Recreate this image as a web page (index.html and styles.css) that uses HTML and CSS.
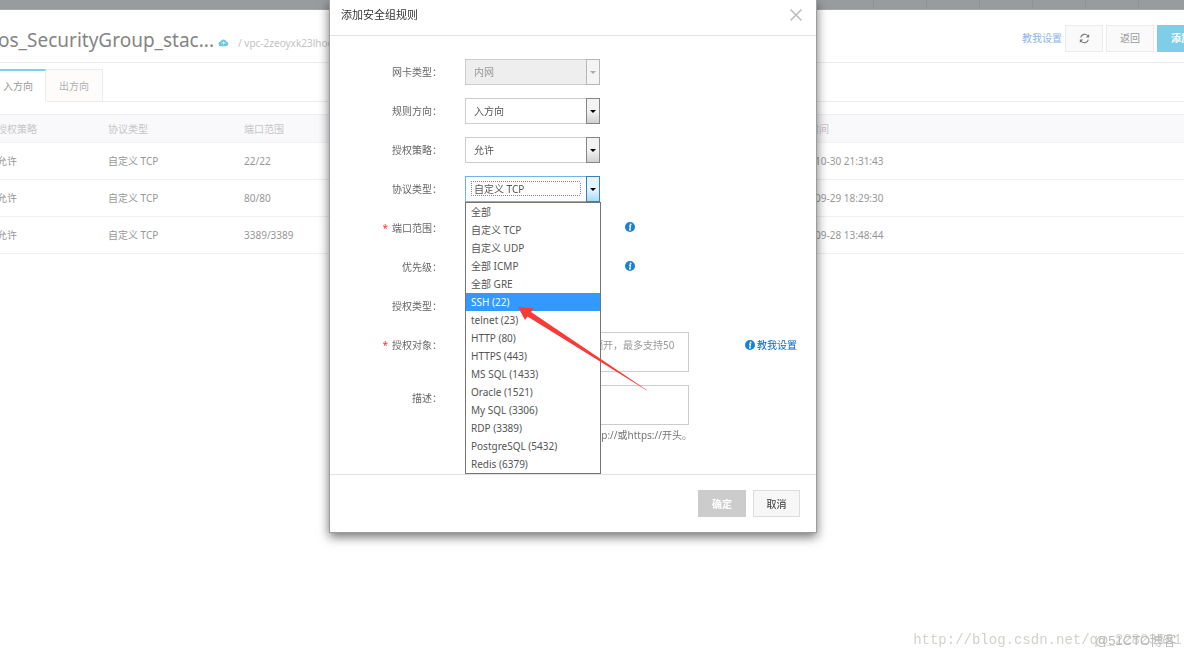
FILE: index.html
```html
<!DOCTYPE html>
<html lang="zh-CN">
<head>
<meta charset="utf-8">
<title>添加安全组规则</title>
<link rel="stylesheet" href="styles.css">
</head>
<body>
<div class="page">
  <nav class="topbar" aria-label="主导航">
    <span class="topbar-item"></span><span class="topbar-item"></span><span class="topbar-item"></span><span class="topbar-item"></span><span class="topbar-item"></span><span class="topbar-item"></span>
  </nav>
  <header class="page-head">
    <h1 class="page-title">os_SecurityGroup_stac...</h1>
    <svg class="cloud" viewBox="0 0 20 14" aria-hidden="true"><path d="M5 13a4.500 4.500 0 0 1-.5-8.900A6 6 0 0 1 15.500 4.600 4.300 4.300 0 0 1 15 13z" fill="#6cc8e5"/><path d="M6 8l4-3 4 3M10 5v5" stroke="#fff" stroke-width="1.200" fill="none"/></svg>
    <span class="vpc">/ vpc-2zeoyxk23lhoo</span>
    <div class="head-actions">
      <a class="help" href="#">教我设置</a>
      <button class="btn refresh" type="button" aria-label="刷新"><svg viewBox="0 0 20 20"><g fill="none" stroke="#777" stroke-width="2"><path d="M3 8a7.500 7.500 0 0 1 13-3"/><path d="M17 12a7.500 7.500 0 0 1-13 3"/></g><path d="M18.500 2v6h-6zM1.500 18v-6h6z" fill="#777"/></svg></button>
      <button class="btn" type="button">返回</button>
      <button class="btn add" type="button">添加安全组规则</button>
    </div>
  </header>
  <div class="tabs" role="tablist">
    <button class="tab active" role="tab" aria-selected="true" type="button">入方向</button>
    <button class="tab" role="tab" aria-selected="false" type="button">出方向</button>
  </div>
  <table class="rules">
    <colgroup><col class="c-policy"><col class="c-proto"><col class="c-port"><col></colgroup>
    <thead><tr><th>授权策略</th><th>协议类型</th><th>端口范围</th><th>创建时间</th></tr></thead>
    <tbody>
      <tr><td>允许</td><td>自定义 TCP</td><td>22/22</td><td>2017-10-30 21:31:43</td></tr>
      <tr><td>允许</td><td>自定义 TCP</td><td>80/80</td><td>2017-09-29 18:29:30</td></tr>
      <tr><td>允许</td><td>自定义 TCP</td><td>3389/3389</td><td>2017-09-28 13:48:44</td></tr>
    </tbody>
  </table>
</div>

<div class="overlay">
  <form class="modal" role="dialog" aria-labelledby="dlg-title">
    <div class="modal-head">
      <h2 class="modal-title" id="dlg-title">添加安全组规则</h2>
      <button class="close" type="button" aria-label="关闭"><svg viewBox="0 0 12 12"><path d="M.5.5l11 11M11.500.5l-11 11" stroke="#bbb" stroke-width="1.500"/></svg></button>
    </div>
    <div class="fields">
      <div class="row"><label class="label" for="nic">网卡类型：</label>
        <div class="select disabled"><select id="nic" disabled><option>内网</option></select></div></div>
      <div class="row"><label class="label" for="dir">规则方向：</label>
        <div class="select"><select id="dir"><option>入方向</option></select></div></div>
      <div class="row"><label class="label" for="policy">授权策略：</label>
        <div class="select"><select id="policy"><option>允许</option></select></div></div>
      <div class="row"><label class="label" for="proto">协议类型：</label>
        <div class="select open"><select id="proto"><option>自定义 TCP</option></select>
          <ul class="menu" role="listbox" aria-label="协议类型">
            <li role="option">全部</li>
            <li role="option">自定义 TCP</li>
            <li role="option">自定义 UDP</li>
            <li role="option">全部 ICMP</li>
            <li role="option">全部 GRE</li>
            <li role="option" class="picked" aria-selected="true">SSH (22)</li>
            <li role="option">telnet (23)</li>
            <li role="option">HTTP (80)</li>
            <li role="option">HTTPS (443)</li>
            <li role="option">MS SQL (1433)</li>
            <li role="option">Oracle (1521)</li>
            <li role="option">My SQL (3306)</li>
            <li role="option">RDP (3389)</li>
            <li role="option">PostgreSQL (5432)</li>
            <li role="option">Redis (6379)</li>
          </ul>
          <svg class="arrow" viewBox="0 0 130 84" aria-hidden="true"><path d="M0 0L16 1.500 13 5 129.500 83.500 128 83 9.500 9.500 7 13z" fill="#f93a37"/></svg>
        </div></div>
      <div class="row"><label class="label" for="port"><span class="req">*</span>端口范围：</label>
        <input class="input" id="port" type="text">
        <svg class="info" viewBox="0 0 10 10" aria-hidden="true"><circle cx="5" cy="5" r="5" fill="#1a80d8"/><circle cx="5.600" cy="2.400" r=".9" fill="#fff"/><path d="M4 4.200h1.500L4.700 7.800h1.200" stroke="#fff" stroke-width="1.200" fill="none"/></svg></div>
      <div class="row"><label class="label" for="prio">优先级：</label>
        <input class="input" id="prio" type="text">
        <svg class="info" viewBox="0 0 10 10" aria-hidden="true"><circle cx="5" cy="5" r="5" fill="#1a80d8"/><circle cx="5.600" cy="2.400" r=".9" fill="#fff"/><path d="M4 4.200h1.500L4.700 7.800h1.200" stroke="#fff" stroke-width="1.200" fill="none"/></svg></div>
      <div class="row"><label class="label" for="kind">授权类型：</label>
        <input class="input" id="kind" type="text"></div>
      <div class="row"><label class="label" for="target"><span class="req">*</span>授权对象：</label>
        <textarea class="area target" id="target" placeholder="隔开，最多支持50"></textarea>
        <a class="teach" href="#"><svg class="info" viewBox="0 0 10 10" aria-hidden="true"><circle cx="5" cy="5" r="5" fill="#1a80d8"/><circle cx="5.600" cy="2.400" r=".9" fill="#fff"/><path d="M4 4.200h1.500L4.700 7.800h1.200" stroke="#fff" stroke-width="1.200" fill="none"/></svg>教我设置</a></div>
      <div class="row"><label class="label" for="desc">描述：</label>
        <div class="stack"><textarea class="area" id="desc"></textarea>
        <p class="hint">不能以http://或https://开头。</p></div></div>
    </div>
    <div class="modal-foot">
      <button class="btn ok" type="submit" disabled>确定</button>
      <button class="btn cancel" type="button">取消</button>
    </div>
  </form>
</div>
<div class="mark mark-url">http://blog.csdn.net/qq_22823581</div>
<div class="mark mark-site">@51CTO博客</div>
</body>
</html>
```
FILE: styles.css
```css
*, *::before, *::after { box-sizing: border-box; }
body {
  margin: 0;
  min-height: 100vh;
  background: #fff;
  color: #999;
  font: 10px/18px "Noto Sans", "Noto Sans CJK SC", sans-serif;
}
button, select, input, textarea { font: inherit; color: inherit; margin: 0; }
a { text-decoration: none; }

.page { overflow: hidden; }
.topbar { display: flex; justify-content: flex-end; height: 10px; background: #999c9e; border-bottom: 1px solid #a4a7a9; }
.topbar-item { width: 53px; border-left: 1px solid #8f9294; }
.topbar-item:last-child { width: 46px; }
.page-head { display: flex; align-items: center; height: 53px; margin-right: -71px; border-bottom: 1px solid #ececec; }
.page-title { margin: 8px 0 0 -2px; font-size: 19px; line-height: 28px; font-weight: 400; color: #858585; white-space: nowrap; }
.cloud { width: 11px; height: 8px; margin: 14px 9px 0 4px; }
.vpc { margin-top: 14px; color: #c4c4c4; white-space: nowrap; }
.head-actions { display: flex; align-items: center; gap: 3px; margin: 4px 0 0 auto; white-space: nowrap; }
.help { color: #8db5e8; }
.btn { height: 27px; padding: 0 13px; border: 1px solid #ebebeb; background: #fafafa; color: #999; white-space: nowrap; }
.refresh { display: grid; place-items: center; width: 38px; }
.refresh svg { width: 11px; height: 11px; }
.add { background: #7fcde6; border-color: #7fcde6; color: #fff; font-weight: 700; }

.tabs { display: flex; height: 33px; margin-top: 6px; border-bottom: 1px solid #ececec; }
.tab { width: 57px; height: 33px; padding: 0; border: 1px solid #ececec; border-left: 0; background: #fdfcfb; color: #b0b0b0; }
.tab.active { width: 46px; padding-right: 9px; border-top: 2px solid #80d0e8; border-bottom-color: #fff; background: #fff; color: #999; }

.rules { width: 100%; margin-top: 12px; border-collapse: collapse; table-layout: fixed; }
.c-policy { width: 108px; }
.c-proto { width: 136px; }
.c-port { width: 545px; }
.rules th, .rules td { padding: 0; text-align: left; font-weight: 400; white-space: nowrap; }
.rules th { height: 28px; background: #f9f9fc; border-top: 1px solid #efeff2; border-bottom: 1px solid #f3f3f5; color: #c6c6c6; }
.rules td { height: 37px; border-bottom: 1px solid #f0f0f0; color: #979797; }
.rules th:first-child, .rules td:first-child { text-indent: -3px; }

.overlay { position: fixed; inset: 0; display: flex; align-items: flex-start; justify-content: center; padding-right: 38px; }
.modal { width: 488px; border: 1px solid #9a9d9e; border-top: 0; background: #fff; color: #666; box-shadow: 0 4px 10px rgba(0, 0, 0, .55); }
.modal-head { display: flex; align-items: center; justify-content: space-between; height: 36px; padding: 0 13px 5px 11px; border-bottom: 1px solid #e2e2e2; }
.modal-title { margin: 0; font-size: 11px; font-weight: 400; color: #333; }
.close { display: grid; place-items: center; width: 14px; height: 14px; padding: 0; border: 0; background: none; }
.close svg { width: 12px; height: 12px; }

.fields { display: grid; gap: 13px; padding: 23px 0 29px; }
.row { display: flex; align-items: flex-start; min-height: 26px; }
.label { width: 112px; margin-right: 23px; line-height: 26px; text-align: right; }
.req { margin-right: 4px; color: #f33; }
.select { position: relative; width: 135px; height: 26px; }
.select select { appearance: none; width: 100%; height: 26px; padding: 0 20px 0 8px; border: 1px solid #ccc; border-radius: 0; background: #fff; color: #555; }
.select::before { content: ""; position: absolute; z-index: 2; right: 4px; top: 12px; border: 3px solid transparent; border-top-color: #000; border-bottom: 0; }
.select::after { content: ""; position: absolute; z-index: 1; right: 0; top: 0; width: 14px; height: 26px; border: 1px solid #858585; background: linear-gradient(#f3f3f3 50%, #d0d0d0); }
.select.disabled select { background: #eee; color: #999; opacity: 1; }
.select.disabled::before { border-top-color: #aaa; }
.select.disabled::after { border-color: #b5b8ba; background: #f4f4f4; }
.select.open::after { border-color: #3c7fb1; background: linear-gradient(#e6f5fd 50%, #a9dbf6); }
.select.open select {
  border-color: #6db4ea;
  background:
    repeating-linear-gradient(90deg, #888 0 1px, #fff 1px 2px) 5px 4px / 110px 1px no-repeat,
    repeating-linear-gradient(90deg, #888 0 1px, #fff 1px 2px) 5px 18px / 110px 1px no-repeat,
    repeating-linear-gradient(#888 0 1px, #fff 1px 2px) 5px 4px / 1px 15px no-repeat,
    repeating-linear-gradient(#888 0 1px, #fff 1px 2px) 114px 4px / 1px 15px no-repeat,
    #fff;
}
.menu { position: absolute; z-index: 3; left: 0; top: 26px; width: 136px; margin: 0; padding: 0; list-style: none; border: 1px solid #767676; background: #fff; color: #555; }
.menu li { padding-left: 5px; white-space: nowrap; }
.menu .picked { background: #3399ff; color: #fff; }
.arrow { position: absolute; z-index: 4; left: 53px; top: 131px; width: 130px; height: 84px; }
.input { width: 135px; height: 26px; border: 1px solid #ccc; background: #fff; }
.info { flex: none; width: 10px; height: 10px; }
.input + .info { margin: 7px 0 0 25px; }
.area { display: block; width: 224px; height: 40px; padding: 3px 8px; border: 1px solid #ccc; background: #fff; resize: none; overflow: hidden; }
.area::placeholder { color: #999; opacity: 1; }
.target { padding: 3px 0 3px 127px; }
.teach { display: flex; align-items: center; gap: 2px; margin-left: 56px; line-height: 26px; color: #06c; }
.stack { width: 227px; }
.hint { margin: 0; line-height: 20px; text-align: right; white-space: nowrap; color: #777; }
.modal-foot { display: flex; justify-content: flex-end; gap: 7px; padding: 15px 16px; border-top: 1px solid #e2e2e2; }
.ok, .cancel { padding: 0; }
.ok { width: 48px; border-color: #ccc; background: #ccc; color: #fff; font-weight: 700; }
.cancel { width: 47px; border-color: #ddd; background: #f7f7f7; color: #333; }

.mark { position: fixed; white-space: nowrap; }
.mark-url { right: 2px; bottom: 6px; font: 14px/20px "Liberation Mono", monospace; color: #d2d2cd; }
.mark-site { right: 8px; bottom: 5px; font: 13px/20px "Liberation Sans", "Noto Sans CJK SC", sans-serif; color: #b9b9b9; }
```
